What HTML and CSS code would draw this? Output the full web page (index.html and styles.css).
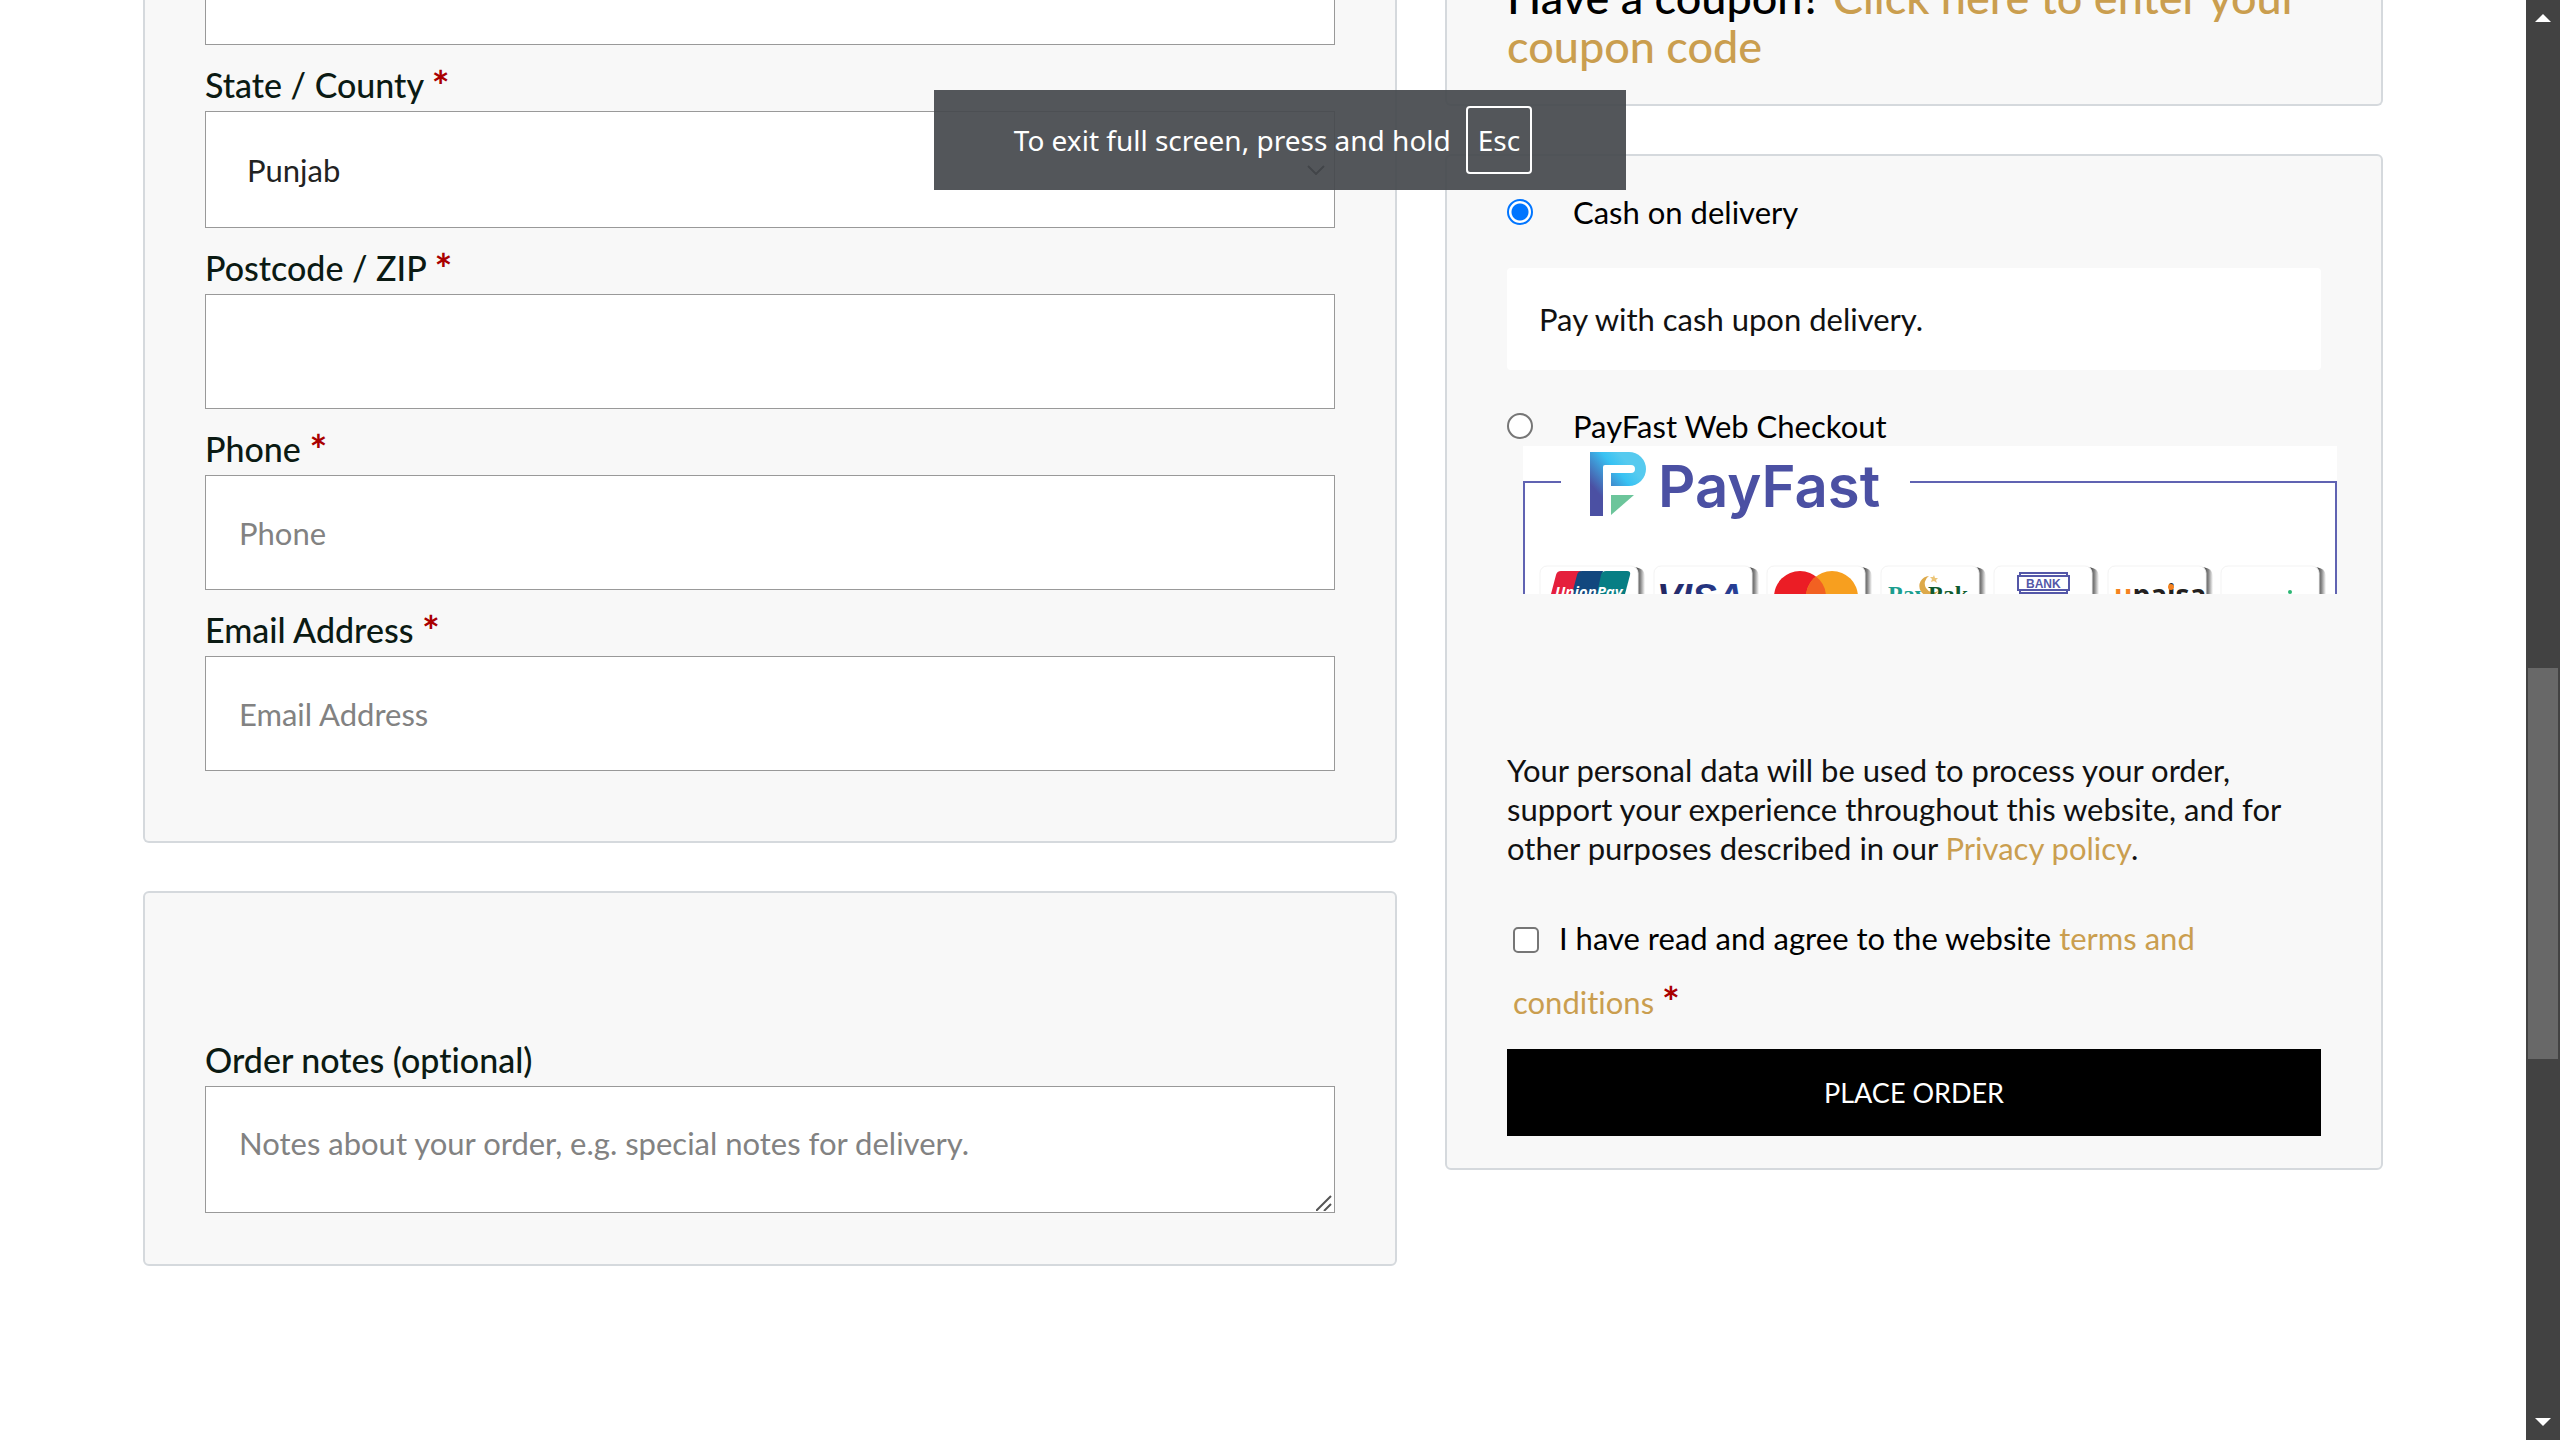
FILE: index.html
```html
<!DOCTYPE html>
<html lang="en">
<head>
<meta charset="utf-8">
<title>Checkout</title>
<link rel="stylesheet" href="styles.css">
</head>
<body>
<main class="checkout">
  <div class="column">
    <section class="panel billing">
      <input class="field" type="text" aria-label="Town / City">
      <label class="label" for="state">State / County <span class="required">*</span></label>
      <div class="stack">
        <select class="field field-select" id="state"><option>Punjab</option></select>
        <svg class="chevron" width="18" height="10" viewBox="0 0 18 10"><path d="M1 1l8 8 8-8" fill="none" stroke="#111" stroke-width="2"/></svg>
      </div>
      <label class="label" for="postcode">Postcode / ZIP <span class="required">*</span></label>
      <input class="field" id="postcode" type="text">
      <label class="label" for="phone">Phone <span class="required">*</span></label>
      <input class="field" id="phone" type="tel" placeholder="Phone">
      <label class="label" for="email">Email Address <span class="required">*</span></label>
      <input class="field" id="email" type="email" placeholder="Email Address">
    </section>
    <section class="panel notes">
      <label class="label" for="notes">Order notes (optional)</label>
      <div class="stack">
        <textarea class="field field-notes" id="notes" placeholder="Notes about your order, e.g. special notes for delivery."></textarea>
        <svg class="grip" width="16" height="16" viewBox="0 0 16 16"><path d="M0 16L15 1M8 16L15 9" fill="none" stroke="#555" stroke-width="2"/></svg>
      </div>
    </section>
  </div>
  <div class="column">
    <section class="panel coupon">
      <p class="coupon-text">Have a coupon? <a href="#">Click here to enter your<br>coupon code</a></p>
    </section>
    <section class="panel payment">
      <div class="method">
        <input class="radio" type="radio" name="method" id="cod" checked>
        <label for="cod">Cash on delivery</label>
      </div>
      <p class="method-info">Pay with cash upon delivery.</p>
      <div class="method">
        <input class="radio" type="radio" name="method" id="payfast">
        <label for="payfast">PayFast Web Checkout</label>
      </div>
      <svg class="payfast" viewBox="0 0 814 148" role="img" aria-label="PayFast">
        <defs>
          <linearGradient id="pf" x1="0" y1="1" x2="1" y2="0">
            <stop offset=".25" stop-color="#4b50a3"/><stop offset=".6" stop-color="#38c2f3"/><stop offset=".75" stop-color="#56caef"/>
          </linearGradient>
          <linearGradient id="visa" x1="0" x2="1"><stop offset="0" stop-color="#23255f"/><stop offset="1" stop-color="#27419b"/></linearGradient>
          <linearGradient id="edge" gradientUnits="userSpaceOnUse" x1="97" x2="105"><stop offset="0" stop-color="#4d4d4d"/><stop offset=".45" stop-color="#8a8a8a"/><stop offset="1" stop-color="#fff"/></linearGradient>
          <g id="card">
            <path d="M92 1Q105 1 105 11V31H92z" fill="url(#edge)"/>
            <rect width="98" height="60" rx="7" fill="#fff" stroke="#f3f3f3"/>
          </g>
        </defs>
        <rect width="814" height="148" fill="#fff"/>
        <path d="M38 36H1V148M387 36H813V148" fill="none" stroke="#6063b2" stroke-width="2"/>
        <path d="M67 6H106A17 17 0 0 1 106 40H88V27H108A4 4 0 0 0 108 19H82Q80 19 80 21V70H67Z" fill="url(#pf)"/>
        <path d="M88 49H111L88 69Z" fill="#6cc59b"/>
        <text class="pf-name" x="135" y="61">PayFast</text>
        <use href="#card" x="17" y="120"/><use href="#card" x="131" y="120"/><use href="#card" x="244" y="120"/><use href="#card" x="358" y="120"/><use href="#card" x="471" y="120"/><use href="#card" x="585" y="120"/><use href="#card" x="698" y="120"/>
        <path d="M28 148L33 129Q34 125 38 125H58L50 148Z" fill="#e51f3c"/>
        <path d="M49 148L54 129Q55 125 59 125H80L75 148Z" fill="#12477e"/>
        <path d="M74 148L78 129Q79 125 83 125H104Q108 125 107 129L102 148Z" fill="#077e84"/>
        <text class="union" x="32" y="151">UnionPay</text>
        <text class="visa" x="134" y="164">VISA</text>
        <circle cx="277" cy="151" r="26" fill="#eb1d25"/><circle cx="309" cy="151" r="26" fill="#f79f1f"/>
        <path d="M293 130.500A26 26 0 0 1 303 151H283A26 26 0 0 1 293 130.500Z" fill="#f26122"/>
        <text class="pak" x="365" y="156" fill="#1b9e8f">Pay</text>
        <path d="M406 130A10 10 0 1 0 415 145A8.500 8.500 0 1 1 406 130Z" fill="#dda94a"/>
        <path d="M411 129l1 3 3 0-2 2 1 3-3-2-3 1 1-3-2-2 3 0z" fill="#ecc578"/>
        <text class="pak" x="405" y="156" fill="#0f5a2e">Pak</text>
        <g fill="#fff" stroke="#5457a8" stroke-width="2"><path d="M497 131V127H544V131M495 130H546V144H495ZM497 144V147H544V144"/></g>
        <text class="bank" x="503" y="142">BANK</text>
        <text class="upaisa" x="591" y="159" fill="#f58220">u<tspan fill="#231f20">paisa</tspan></text>
        <circle cx="648" cy="141" r="3" fill="#f58220"/>
        <circle cx="767" cy="146" r="2" fill="#2bb673"/>
      </svg>
      <p class="policy">Your personal data will be used to process your order,<br>support your experience throughout this website, and for<br>other purposes described in our <a href="#">Privacy policy</a>.</p>
      <div class="terms">
        <input class="checkbox" type="checkbox" id="terms"><label for="terms">I have read and agree to the website <a href="#">terms and<br>conditions</a> <span class="required">*</span></label>
      </div>
      <button class="place-order" type="submit">PLACE ORDER</button>
    </section>
  </div>
</main>
<div class="fullscreen-notice">To exit full screen, press and hold <kbd class="key">Esc</kbd></div>
<div class="scrollbar">
  <svg width="16" height="8" viewBox="0 0 16 8"><path d="M8 0l8 8H0z" fill="#fff"/></svg>
  <div class="thumb"></div>
  <svg width="16" height="8" viewBox="0 0 16 8"><path d="M8 8l8-8H0z" fill="#fff"/></svg>
</div>
</body>
</html>
```
FILE: styles.css
```css
* { box-sizing: border-box; }
html, body { height: 100%; }
body {
  margin: 0;
  overflow: hidden;
  background: #fff;
  color: #000;
  font: 31px/40px Lato, "Open Sans", sans-serif;
  font-variant-ligatures: none;
}
p { margin: 0; }
a { color: #ca9e4f; text-decoration: none; }

.checkout {
  display: grid;
  grid-template-columns: 1254fr 938fr;
  gap: 48px;
  align-items: start;
  padding: 0 143px;
  margin-right: 34px;
}
.column { display: flex; flex-direction: column; gap: 48px; min-width: 0; }
.panel {
  display: flex;
  flex-direction: column;
  padding: 0 60px;
  background: #f8f8f8;
  border: 2px solid #d5d9dd;
  border-radius: 6px;
}
.billing, .coupon { border-top: 0; border-radius: 0 0 6px 6px; }
.billing { padding-bottom: 70px; }
.billing > .field:first-child { margin-top: -70px; }
.notes { padding-top: 127px; padding-bottom: 51px; }

.label {
  margin-top: 14px;
  color: #0b1a13;
  font-size: 34px;
  font-weight: 500;
  line-height: 52px;
}
.required { color: #a00; font-size: 42px; font-weight: 700; line-height: 0; vertical-align: -4px; }
.field {
  display: block;
  width: 100%;
  height: 115px;
  margin: 0;
  padding: 0 33px;
  border: 1px solid #999;
  border-radius: 0;
  outline: 0;
  background: #fff;
  color: #222;
  font: inherit;
}
.field::placeholder { color: #828282; opacity: 1; }
.stack { display: grid; align-items: center; }
.stack > * { grid-area: 1 / 1; }
.field-select { height: 117px; padding: 0 41px; appearance: none; }
.chevron { justify-self: end; margin-right: 10px; }
.field-notes { height: 127px; padding-top: 36px; resize: none; }
.grip { place-self: end; margin: 0 3px 2px 0; }

.coupon { padding-bottom: 33px; }
.coupon-text { margin-top: -27px; font-size: 45px; font-weight: 500; line-height: 49px; white-space: nowrap; }

.payment { padding-top: 36px; padding-bottom: 32px; }
.method { display: flex; align-items: center; gap: 40px; }
.radio, .checkbox {
  width: 26px;
  height: 26px;
  margin: 0;
  border: 2px solid #767676;
  border-radius: 50%;
  background: #fff;
  appearance: none;
}
.radio:checked { border-color: #0075ff; background: radial-gradient(#0075ff 8px, #fff 9px); }
.checkbox { border-radius: 5px; margin-right: 20px; vertical-align: -3px; }
.method-info { margin: 36px 0; padding: 31px 32px; border-radius: 4px; background: #fff; color: #111; }
.payfast { display: block; margin: 0 -16px 0 16px; }
.pf-name { font: 600 58px Inter, sans-serif; fill: #4b50a3; }
.union { font: italic 700 15px "Open Sans", sans-serif; fill: #fff; }
.visa { font: italic 700 37px "Liberation Sans", sans-serif; fill: url(#visa); }
.pak { font: 700 24px "Liberation Serif", serif; }
.bank { font: 700 12px "Liberation Sans", sans-serif; fill: #5457a8; }
.upaisa { font: 700 28px "Open Sans", sans-serif; }
.policy { margin-top: 157px; color: #111; line-height: 39px; white-space: nowrap; }
.terms { margin: 38px 0 15px 6px; line-height: 64px; white-space: nowrap; }
.place-order {
  height: 87px;
  border: 0;
  background: #000;
  color: #fff;
  font: inherit;
  font-size: 27px;
}

.fullscreen-notice {
  position: absolute;
  top: 90px;
  left: 50%;
  display: flex;
  align-items: center;
  justify-content: center;
  gap: 15px;
  width: 692px;
  height: 100px;
  padding-right: 14px;
  transform: translateX(-50%);
  background: rgba(70, 73, 78, .93);
  color: #fff;
  font: 28px "Noto Sans", sans-serif;
}
.key {
  padding: 13px 10px;
  border: 2px solid #fff;
  border-radius: 4px;
  font: inherit;
}
.scrollbar {
  position: absolute;
  top: 0;
  right: 0;
  bottom: 0;
  display: flex;
  flex-direction: column;
  align-items: center;
  justify-content: space-between;
  width: 34px;
  padding: 14px 0;
  background: #424242;
}
.thumb { width: 30px; height: 391px; margin-top: 287px; background: #686868; }
```
